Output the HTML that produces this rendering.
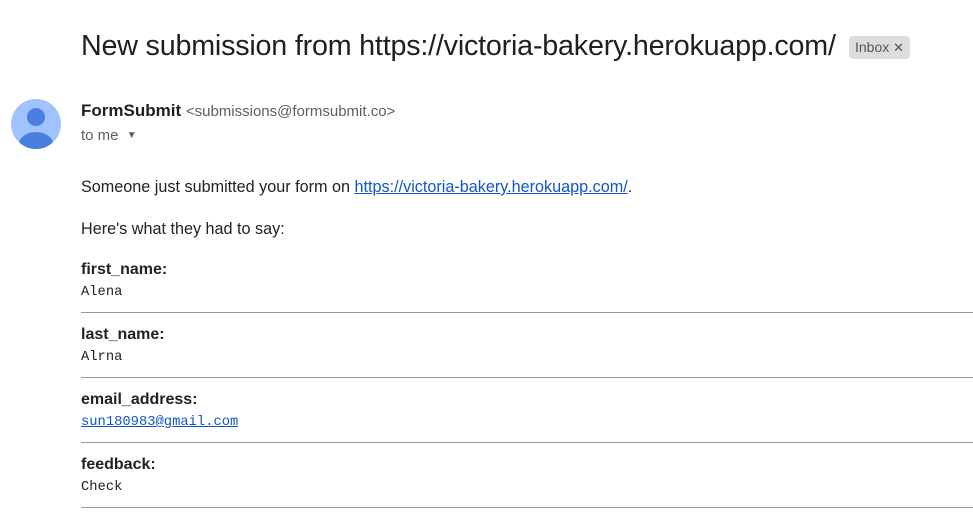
<!DOCTYPE html>
<html><head><style>
body{margin:0;background:#fff;width:973px;height:517px;overflow:hidden;font-family:"Liberation Sans",Arial,sans-serif;color:#222;position:relative}
.a{position:absolute;white-space:nowrap}
.t{left:81px;top:30px;font-size:28.7px;color:#1f1f1f;letter-spacing:-0.2px}
.tag{left:849px;top:36px;background:#ddd;border-radius:4px;font-size:14px;color:#555;padding:2px 6px;height:19px;line-height:19px}
.lab{left:81px;font-size:16px;font-weight:bold;color:#222}
.val{left:81px;font-family:"Liberation Mono",monospace;font-size:13.8px;color:#222}
.hr{left:81px;width:892px;height:1px;background:#999}
a{color:#15c;text-decoration:underline}
</style></head><body>
<div class="a t">New submission from https://victoria-bakery.herokuapp.com/</div>
<div class="a tag">Inbox <span style="font-size:13px">✕</span></div>
<svg class="a" style="left:11px;top:99px" width="50" height="50" viewBox="0 0 50 50">
<defs><clipPath id="c"><circle cx="25" cy="25" r="25"/></clipPath></defs>
<circle cx="25" cy="25" r="25" fill="#a0c3ff"/>
<g clip-path="url(#c)" fill="#4a7fe0"><circle cx="25" cy="18" r="9"/><ellipse cx="25" cy="45" rx="17" ry="12"/></g>
</svg>
<div class="a" style="left:81px;top:101px;font-size:17px;font-weight:bold;color:#1f1f1f">FormSubmit <span style="font-weight:normal;font-size:15px;color:#5e5e5e">&lt;submissions@formsubmit.co&gt;</span></div>
<div class="a" style="left:81px;top:127px;font-size:15px;color:#5e5e5e">to me <span style="font-size:10px;display:inline-block;margin-left:4px;vertical-align:2px">▼</span></div>
<div class="a" style="left:81px;top:178px;font-size:16.2px">Someone just submitted your form on <a>https://victoria-bakery.herokuapp.com/</a>.</div>
<div class="a" style="left:81px;top:220px;font-size:16.2px">Here's what they had to say:</div>
<div class="a lab" style="top:261px">first_name:</div><div class="a val" style="top:285px">Alena</div><div class="a hr" style="top:312px"></div>
<div class="a lab" style="top:326px">last_name:</div><div class="a val" style="top:350px">Alrna</div><div class="a hr" style="top:377px"></div>
<div class="a lab" style="top:391px">email_address:</div><div class="a val" style="top:415px"><a>sun180983@gmail.com</a></div><div class="a hr" style="top:442px"></div>
<div class="a lab" style="top:456px">feedback:</div><div class="a val" style="top:480px">Check</div><div class="a hr" style="top:507px"></div>
</body></html>
